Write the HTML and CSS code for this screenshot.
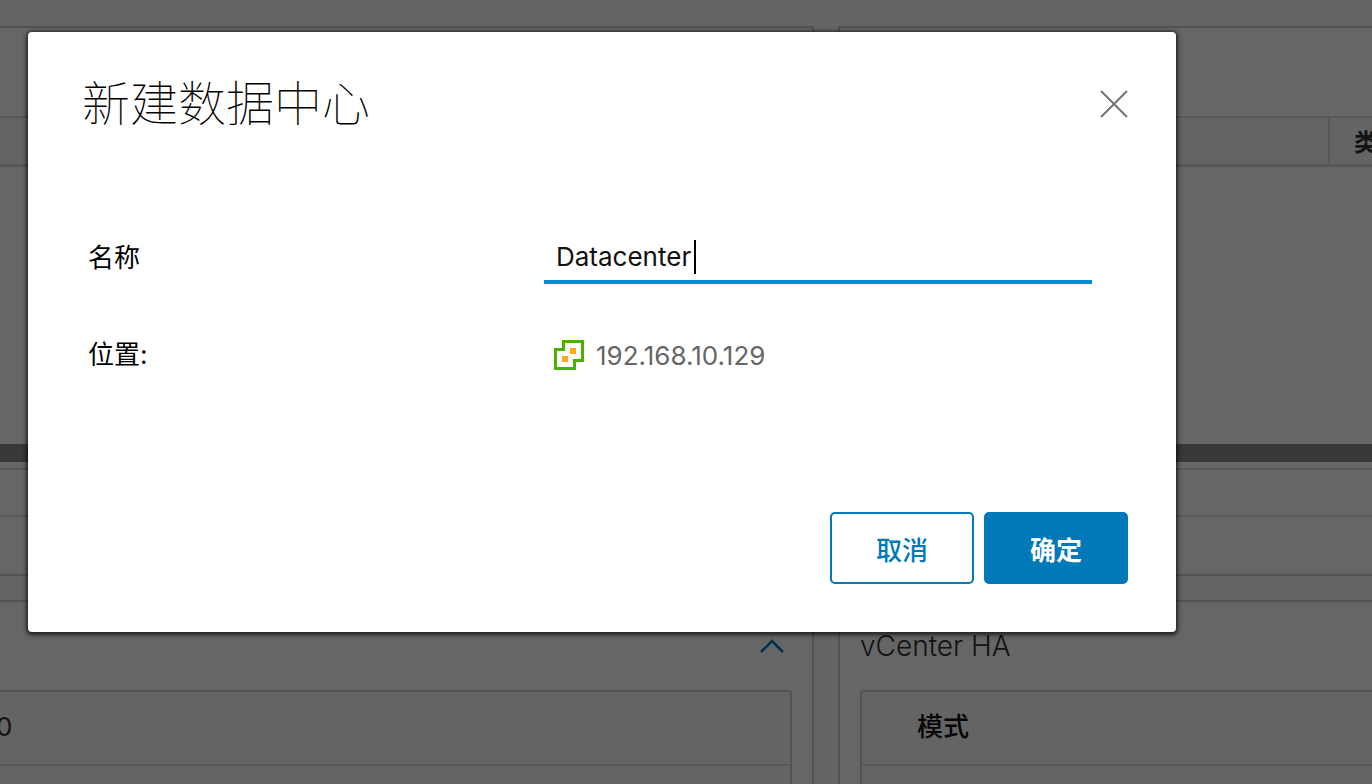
FILE: index.html
```html
<!DOCTYPE html>
<html lang="zh-CN">
<head>
<meta charset="utf-8">
<meta name="viewport" content="width=device-width, initial-scale=1">
<title>新建数据中心</title>
<link rel="stylesheet" href="styles.css">
</head>
<body>
<main class="dashboard">
  <section class="card card-left">
    <div class="card-head"></div>
    <div class="grid-head"></div>
    <div class="grid-body"></div>
    <div class="scroll-strip"></div>
    <div class="grid-pager"></div>
    <div class="card-foot"></div>
  </section>
  <section class="card card-right">
    <div class="card-head"></div>
    <div class="grid-head"><div class="grid-cell">类</div></div>
    <div class="grid-body"></div>
    <div class="scroll-strip"></div>
    <div class="grid-pager"></div>
    <div class="card-foot"></div>
  </section>
  <section class="card card-left card-open">
    <header class="card-head card-head-end">
      <button class="collapse" type="button" aria-label="折叠">
        <svg viewBox="0 0 28 18" width="28" height="18"><path d="M3 15 14 4l11 11" fill="none" stroke="currentColor" stroke-width="2.6"/></svg>
      </button>
    </header>
    <div class="list list-left">
      <div class="list-row">0</div>
      <div class="list-row"></div>
    </div>
  </section>
  <section class="card card-right card-open">
    <header class="card-head"><h2 class="card-title">vCenter HA</h2></header>
    <div class="list list-right">
      <div class="list-row list-label">模式</div>
      <div class="list-row"></div>
    </div>
  </section>
</main>
<div class="backdrop">
  <form class="dialog" role="dialog" aria-modal="true" aria-labelledby="dialog-title">
    <header class="dialog-head">
      <h1 class="dialog-title" id="dialog-title">新建数据中心</h1>
      <button class="close" type="button" aria-label="关闭">
        <svg viewBox="0 0 28 28" width="28" height="28"><path d="M1 1 27 27M27 1 1 27" fill="none" stroke="currentColor" stroke-width="2"/></svg>
      </button>
    </header>
    <div class="dialog-body">
      <div class="row">
        <label class="label" for="name">名称</label>
        <div class="field">
          <input class="input" id="name" type="text" value="Datacenter" autocomplete="off">
          <span class="caret"></span>
        </div>
      </div>
      <div class="row">
        <span class="label">位置:</span>
        <div class="location">
          <svg viewBox="0 0 30 30" width="30" height="30">
            <path d="M9.500 1.500H28.500V20.500H20.500V28.500H1.500V9.500H9.500Z" fill="#fff" stroke="#4cb000" stroke-width="3"/>
            <path d="M16 8h6v6h-6zM8 16h6v6H8z" fill="#ffaa14"/>
          </svg>
          <span>192.168.10.129</span>
        </div>
      </div>
    </div>
    <footer class="dialog-foot">
      <button class="btn" type="button">取消</button>
      <button class="btn btn-primary" type="submit">确定</button>
    </footer>
  </form>
</div>
</body>
</html>
```

FILE: styles.css
```css
* {
  box-sizing: border-box;
}

body {
  margin: 0;
  height: 100vh;
  overflow: hidden;
  position: relative;
  background: #fafafa;
  color: #313131;
  font-family: Inter, "Noto Sans CJK SC", sans-serif;
  font-size: 26px;
}

button,
input {
  font: inherit;
}

.dashboard {
  display: grid;
  grid-template-columns: 814fr 534fr;
  grid-template-rows: auto 1fr;
  gap: 24px;
  height: 100%;
  padding-top: 26px;
}

.card {
  min-width: 0;
  min-height: 0;
  overflow: hidden;
  background: #fff;
  border: 2px solid #ccc;
}

.card-left {
  border-left: 0;
}

.card-right {
  border-right: 0;
}

.card-open {
  border-bottom: 0;
}

.card-head {
  display: flex;
  align-items: center;
  height: 88px;
  padding: 0 20px;
}

.card-head-end {
  justify-content: flex-end;
}

.card-title {
  margin: 0;
  font-size: 28px;
  font-weight: 300;
  line-height: 36px;
  color: #313131;
}

.grid-head {
  display: flex;
  justify-content: flex-end;
  height: 51px;
  background: #fafafa;
  border-top: 2px solid #dcdcdc;
  border-bottom: 3px solid #d6d6d6;
}

.grid-cell {
  width: 44px;
  padding-left: 24px;
  border-left: 2px solid #dcdcdc;
  overflow: hidden;
  white-space: nowrap;
  font-size: 24px;
  font-weight: 700;
  line-height: 50px;
}

.grid-body {
  height: 277px;
}

.scroll-strip {
  height: 18px;
  background: #8c8c8c;
}

.grid-pager {
  height: 47px;
  margin-top: 6px;
  border-top: 2px solid #dcdcdc;
}

.card-foot {
  height: 59px;
  border-top: 2px solid #dcdcdc;
}

.collapse {
  display: flex;
  margin-right: 6px;
  padding: 0;
  border: 0;
  background: none;
  color: #0079b8;
}

.list {
  border: 2px solid #ccc;
  background: #fafafa;
}

.list-left {
  margin-left: -4px;
  margin-right: 20px;
  border-left: 0;
  border-top-right-radius: 4px;
}

.list-right {
  margin-left: 20px;
  border-right: 0;
  border-top-left-radius: 4px;
}

.list-row {
  height: 74px;
  border-bottom: 2px solid #dcdcdc;
  line-height: 70px;
}

.list-label {
  padding-left: 55px;
  font-weight: 500;
  color: #111;
}

.backdrop {
  position: absolute;
  inset: 0;
  padding: 32px 196px 0 28px;
  background: rgba(0, 0, 0, 0.6);
}

.dialog {
  padding: 44px 48px 48px 54px;
  background: #fff;
  border-radius: 4px;
  box-shadow: 0 1px 3px 2px rgba(0, 0, 0, 0.5), 0 2px 6px 2px rgba(0, 0, 0, 0.2);
}

.dialog-head {
  display: flex;
  align-items: center;
  justify-content: space-between;
}

.dialog-title {
  margin: 0;
  font-size: 48px;
  font-weight: 100;
  line-height: 56px;
  color: #000;
}

.close {
  display: flex;
  padding: 0;
  border: 0;
  background: none;
  color: #737373;
}

.dialog-body {
  display: flex;
  flex-direction: column;
  gap: 45px;
  padding: 100px 36px 0 6px;
}

.row {
  display: grid;
  grid-template-columns: 456fr 548fr;
  align-items: center;
}

.label {
  line-height: 52px;
  color: #000;
}

.field {
  position: relative;
}

.input {
  display: block;
  width: 100%;
  height: 52px;
  padding: 0 12px;
  border: 0;
  border-bottom: 4px solid #0090d1;
  outline: 0;
  background: none;
  color: #111;
}

.caret {
  position: absolute;
  top: 8px;
  left: 150px;
  width: 2px;
  height: 34px;
  background: #000;
}

.location {
  display: flex;
  align-items: center;
  gap: 12px;
  padding-left: 10px;
  color: #666;
}

.dialog-foot {
  display: flex;
  justify-content: flex-end;
  gap: 10px;
  padding-top: 131px;
}

.btn {
  width: 144px;
  height: 72px;
  padding: 0;
  border: 2px solid #0079b8;
  border-radius: 5px;
  background: #fff;
  color: #0079b8;
  font-weight: 500;
}

.btn-primary {
  background: #0079b8;
  color: #fff;
  font-weight: 700;
}
```
